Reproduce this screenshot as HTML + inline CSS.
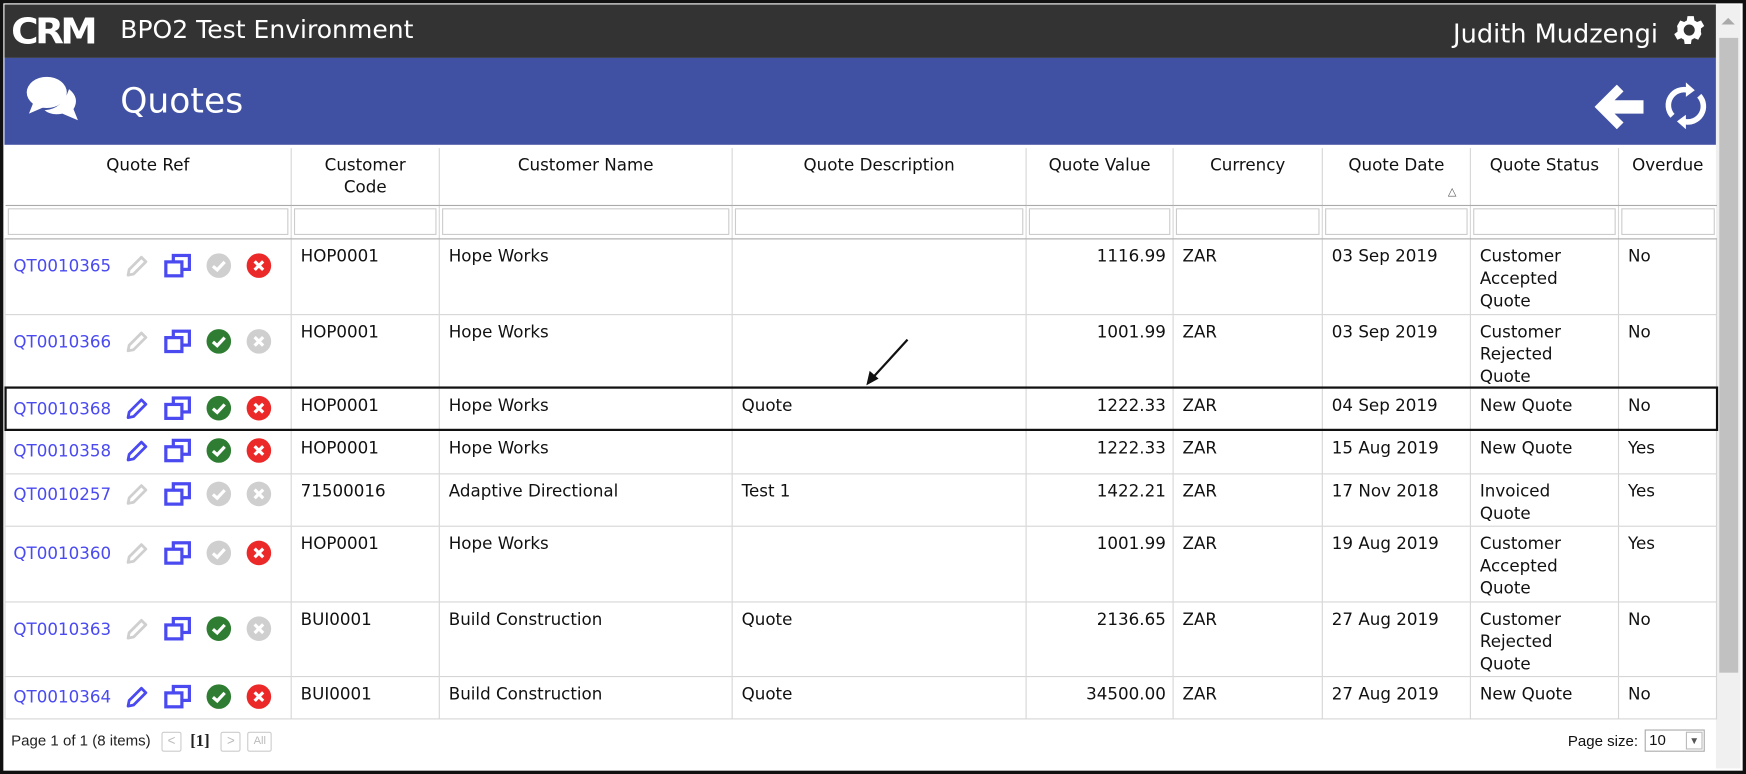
<!DOCTYPE html>
<html><head><meta charset="utf-8">
<style>
html,body{margin:0;padding:0;background:#fff;overflow:hidden}
#w{position:absolute;left:0;top:0;width:1568px;height:695px;transform:scale(1.11352,1.1137);transform-origin:0 0;font-family:"DejaVu Sans","Liberation Sans",sans-serif;font-size:15px;color:#111;background:#fff}
.frame{position:absolute;left:0;top:0;width:1562px;height:689px;border:3px solid #111;}
.top{position:absolute;left:4px;top:4px;width:1537px;height:48px;background:#333;color:#fff}
.blue{position:absolute;left:4px;top:52px;width:1537px;height:78px;background:#4051a3;color:#fff}
.scroll{position:absolute;left:1541px;top:4px;width:22px;height:686px;background:#f0f0f0}
.thumb{position:absolute;left:3px;top:30px;width:17px;height:570px;background:#c1c1c1}
table{position:absolute;left:4px;top:133px;border-collapse:collapse;table-layout:fixed;width:1537px}
td,th{border:1px solid #d6d6d6;vertical-align:top;padding:0 8px;overflow:hidden;line-height:20px}
th{font-weight:normal;text-align:center;height:51px;padding-top:5px;box-sizing:border-box;border-top:none;border-bottom:1px solid #aaa}
tr.f td{height:30px;padding:2px 2px;box-sizing:border-box;border-bottom:1px solid #aaa}
tr.f td div{height:24px;border:1px solid #ccc;background:#fff;box-sizing:border-box}
tbody td{padding-top:5px;box-sizing:border-box}
td.r{text-align:right;padding-right:6px}
td.q{padding:12px 0 0 7px;white-space:nowrap}
.lnk{color:#4a4af0;display:inline-block;width:96px;vertical-align:middle}
.ic{display:inline-block;vertical-align:middle;margin-right:13px}
.foot{position:absolute;left:10px;top:657px;font-family:"Liberation Sans",sans-serif;font-size:13.5px;color:#222}
.pb{display:inline-block;width:16px;height:16px;border:1px solid #ccc;border-radius:2px;color:#bbb;font-size:12px;text-align:center;line-height:15px;vertical-align:middle;margin-left:6px}
</style></head><body><div id="w">
<div class="frame"></div>
<div class="top">
 <div style="position:absolute;left:6px;top:6px;font:bold 32px 'DejaVu Sans',sans-serif;letter-spacing:-3px;line-height:36px;transform:scaleX(1.05);transform-origin:0 0">CRM</div>
 <div style="position:absolute;left:104px;top:9px;font-size:22.5px;line-height:28px">BPO2 Test Environment</div>
 <div style="position:absolute;right:52px;top:13px;font-size:23px;line-height:28px">Judith Mudzengi</div>
 <svg style="position:absolute;left:1496px;top:6px" width="34" height="34" viewBox="0 0 24 24"><path fill="#fff" d="M19.4 13a7.5 7.5 0 0 0 0-2l2.1-1.6-2-3.5-2.5 1a7 7 0 0 0-1.7-1l-.4-2.7h-4l-.4 2.7a7 7 0 0 0-1.7 1l-2.5-1-2 3.5L4.6 11a7.5 7.5 0 0 0 0 2l-2.1 1.6 2 3.5 2.5-1a7 7 0 0 0 1.7 1l.4 2.7h4l.4-2.7a7 7 0 0 0 1.7-1l2.5 1 2-3.5zM12 15.5a3.5 3.5 0 1 1 0-7 3.5 3.5 0 0 1 0 7z"/></svg>
</div>
<div class="blue">
 <svg style="position:absolute;left:18px;top:14px" width="50" height="46" viewBox="0 0 50 46"><ellipse cx="20" cy="17" rx="18" ry="14" fill="#fff"/><path d="M8 26 L4 36 L18 30Z" fill="#fff"/><path d="M40 14 Q50 22 44 32 L48 42 L34 36 Q24 38 18 33 Q34 32 40 14Z" fill="#fff"/></svg>
 <div style="position:absolute;left:104px;top:20px;font-size:31px;line-height:38px">Quotes</div>
 <svg style="position:absolute;left:1428px;top:24px" width="44" height="40" viewBox="0 0 44 40"><path d="M0 20 L20 0 L26 6 L18 14 L44 14 L44 26 L18 26 L26 34 L20 40Z" fill="#fff"/></svg>
 <svg style="position:absolute;left:1490px;top:22px" width="40" height="42" viewBox="0 0 40 42"><path d="M8 30 A14 14 0 0 1 22 7" stroke="#fff" stroke-width="5" fill="none"/><path d="M32 12 A14 14 0 0 1 18 35" stroke="#fff" stroke-width="5" fill="none"/><path d="M20 0 L28 7 L20 13Z" fill="#fff"/><path d="M20 29 L12 35 L20 42Z" fill="#fff"/></svg>
</div>
<div class="scroll"><div style="position:absolute;left:5px;top:12px;border:6px solid transparent;border-bottom:6px solid #aaa;border-top:none"></div><div class="thumb"></div></div>
<table>
<colgroup><col style="width:257px"><col style="width:133px"><col style="width:263px"><col style="width:264px"><col style="width:132px"><col style="width:134px"><col style="width:133px"><col style="width:133px"><col style="width:88px"></colgroup>
<thead><tr><th style="border-left:none">Quote Ref</th><th>Customer<br>Code</th><th>Customer Name</th><th>Quote Description</th><th>Quote Value</th><th>Currency</th><th style="position:relative">Quote Date<span style="position:absolute;right:12px;top:30px;font-size:10px;color:#555">△</span></th><th>Quote Status</th><th style="border-right:none">Overdue</th></tr>
<tr class="f"><td style="border-left:none"><div></div></td><td><div></div></td><td><div></div></td><td><div></div></td><td><div></div></td><td><div></div></td><td><div></div></td><td><div></div></td><td style="border-right:none"><div></div></td></tr></thead>
<tbody>
<tr style="height:68px"><td class="q"><span class="lnk">QT0010365</span>PG CP KG XR</td><td>HOP0001</td><td>Hope Works</td><td></td><td class="r">1116.99</td><td>ZAR</td><td>03 Sep 2019</td><td>Customer<br>Accepted<br>Quote</td><td>No</td></tr>
<tr style="height:66px"><td class="q"><span class="lnk">QT0010366</span>PG CP KA XG</td><td>HOP0001</td><td>Hope Works</td><td></td><td class="r">1001.99</td><td>ZAR</td><td>03 Sep 2019</td><td>Customer<br>Rejected<br>Quote</td><td>No</td></tr>
<tr style="height:38px;outline:2px solid #111;outline-offset:-1px"><td class="q" style="padding-top:6px"><span class="lnk">QT0010368</span>PB CP KA XR</td><td>HOP0001</td><td>Hope Works</td><td>Quote</td><td class="r">1222.33</td><td>ZAR</td><td>04 Sep 2019</td><td>New Quote</td><td>No</td></tr>
<tr style="height:39px"><td class="q" style="padding-top:6px"><span class="lnk">QT0010358</span>PB CP KA XR</td><td>HOP0001</td><td>Hope Works</td><td></td><td class="r">1222.33</td><td>ZAR</td><td>15 Aug 2019</td><td>New Quote</td><td>Yes</td></tr>
<tr style="height:47px"><td class="q" style="padding-top:6px"><span class="lnk">QT0010257</span>PG CP KG XG</td><td>71500016</td><td>Adaptive Directional</td><td>Test 1</td><td class="r">1422.21</td><td>ZAR</td><td>17 Nov 2018</td><td>Invoiced<br>Quote</td><td>Yes</td></tr>
<tr style="height:68px"><td class="q"><span class="lnk">QT0010360</span>PG CP KG XR</td><td>HOP0001</td><td>Hope Works</td><td></td><td class="r">1001.99</td><td>ZAR</td><td>19 Aug 2019</td><td>Customer<br>Accepted<br>Quote</td><td>Yes</td></tr>
<tr style="height:67px"><td class="q"><span class="lnk">QT0010363</span>PG CP KA XG</td><td>BUI0001</td><td>Build Construction</td><td>Quote</td><td class="r">2136.65</td><td>ZAR</td><td>27 Aug 2019</td><td>Customer<br>Rejected<br>Quote</td><td>No</td></tr>
<tr style="height:38px"><td class="q" style="padding-top:6px"><span class="lnk">QT0010364</span>PB CP KA XR</td><td>BUI0001</td><td>Build Construction</td><td>Quote</td><td class="r">34500.00</td><td>ZAR</td><td>27 Aug 2019</td><td>New Quote</td><td>No</td></tr>
</tbody></table>
<svg style="position:absolute;left:0;top:0" width="1568" height="695"><line x1="815" y1="305" x2="783" y2="340" stroke="#111" stroke-width="2"/><path d="M778 346 L781 333 L789 340Z" fill="#111"/></svg>
<div class="foot">Page 1 of 1 (8 items) <span class="pb">&lt;</span> <b style="font-family:'Liberation Serif',serif;font-size:15px;margin:0 4px">[1]</b><span class="pb">&gt;</span><span class="pb" style="width:20px;font-size:10px">All</span></div>
<div style="position:absolute;left:1408px;top:658px;font-family:'Liberation Sans',sans-serif;font-size:13.5px">Page size:</div>
<div style="position:absolute;left:1477px;top:655px;width:54px;height:20px;border:1px solid #aaa;box-sizing:border-box;font-family:'Liberation Sans',sans-serif;font-size:13.5px;padding-left:3px;line-height:18px">10<span style="position:absolute;right:1px;top:1px;width:15px;height:16px;border:1px solid #bbb;box-sizing:border-box;font-size:9px;text-align:center;line-height:14px;color:#555">▼</span></div>
</div>
<script>
var P={PG:'<svg class="ic" width="22" height="22" viewBox="0 0 22 22" style="margin-left:4px"><path d="M3 19 L4 14 L15 3 L19 7 L8 18Z" fill="none" stroke="#cfcfcf" stroke-width="2.5" stroke-linejoin="round"/></svg>',
PB:'<svg class="ic" width="22" height="22" viewBox="0 0 22 22" style="margin-left:4px"><path d="M3 19 L4 14 L15 3 L19 7 L8 18Z" fill="none" stroke="#4a4af0" stroke-width="2.5" stroke-linejoin="round"/></svg>',
CP:'<svg class="ic" width="25" height="24" viewBox="0 0 26 24"><rect x="9" y="2" width="15" height="13" fill="none" stroke="#4a4af0" stroke-width="3"/><rect x="2" y="8" width="15" height="13" fill="#fff" stroke="#4a4af0" stroke-width="3"/></svg>',
KG:'<svg class="ic" width="23" height="23" viewBox="0 0 24 24"><circle cx="12" cy="12" r="11.5" fill="#cfcfcf"/><path d="M6.5 12.5 L10.5 16 L17.5 8.5" stroke="#fff" stroke-width="3" fill="none"/></svg>',
KA:'<svg class="ic" width="23" height="23" viewBox="0 0 24 24"><circle cx="12" cy="12" r="11.5" fill="#2e7d32"/><path d="M6.5 12.5 L10.5 16 L17.5 8.5" stroke="#fff" stroke-width="3" fill="none"/></svg>',
XR:'<svg class="ic" width="23" height="23" viewBox="0 0 24 24"><circle cx="12" cy="12" r="11.5" fill="#ec2929"/><path d="M8 8 L16 16 M16 8 L8 16" stroke="#fff" stroke-width="3"/></svg>',
XG:'<svg class="ic" width="23" height="23" viewBox="0 0 24 24"><circle cx="12" cy="12" r="11.5" fill="#cfcfcf"/><path d="M8 8 L16 16 M16 8 L8 16" stroke="#fff" stroke-width="3"/></svg>'};
document.querySelectorAll('td.q').forEach(function(td){var l=td.querySelector('.lnk').outerHTML;var t=td.textContent.replace(td.querySelector('.lnk').textContent,'').trim().split(' ');td.innerHTML=l+t.map(function(k){return P[k]}).join('');});
</script>
</body></html>
